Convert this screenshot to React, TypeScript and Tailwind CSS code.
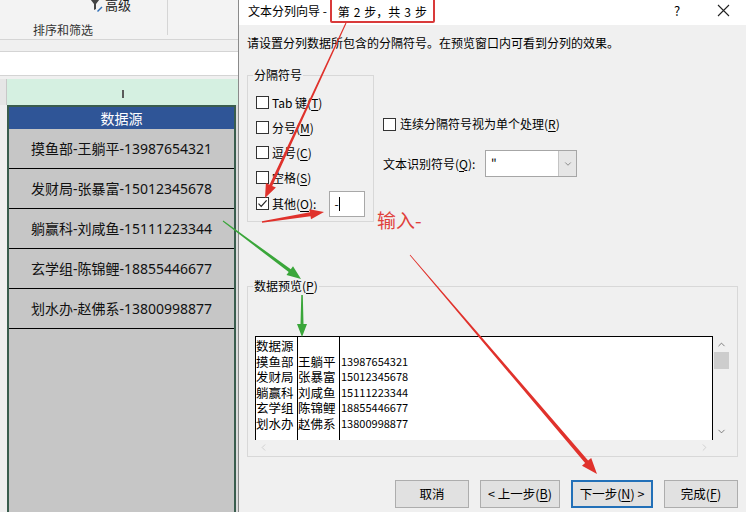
import { ChevronDown, ChevronLeft, ChevronRight, ChevronUp } from "lucide-react";
import type { ReactNode } from "react";

type Pt = [number, number];

// tapered arrow: thin tail, wider toward the head, triangular tip
function arrowPoints(from: Pt, to: Pt, w0: number, w1: number, headLen: number, headW: number) {
  const dx = to[0] - from[0];
  const dy = to[1] - from[1];
  const len = Math.hypot(dx, dy);
  const ux = dx / len;
  const uy = dy / len;
  const nx = -uy;
  const ny = ux;
  const bx = to[0] - ux * headLen;
  const by = to[1] - uy * headLen;
  const pts: Pt[] = [
    [from[0] + (nx * w0) / 2, from[1] + (ny * w0) / 2],
    [bx + (nx * w1) / 2, by + (ny * w1) / 2],
    [bx + (nx * headW) / 2, by + (ny * headW) / 2],
    to,
    [bx - (nx * headW) / 2, by - (ny * headW) / 2],
    [bx - (nx * w1) / 2, by - (ny * w1) / 2],
    [from[0] - (nx * w0) / 2, from[1] - (ny * w0) / 2],
  ];
  return pts.map((p) => p.map((v) => v.toFixed(1)).join(",")).join(" ");
}

const U = ({ children }: { children: ReactNode }) => (
  <span className="underline underline-offset-2">{children}</span>
);

const Box = ({ checked }: { checked?: boolean }) => (
  <span className="w-[13px] h-[13px] border border-[#333] bg-white flex items-center justify-center shrink-0">
    {checked && (
      <svg width="11" height="11" viewBox="0 0 11 11">
        <path d="M1.5 5.6 L4.2 8.3 L9.6 2.4" fill="none" stroke="#222" strokeWidth="1.2" />
      </svg>
    )}
  </span>
);

const sources = [
  ["摸鱼部", "王躺平", "13987654321"],
  ["发财局", "张暴富", "15012345678"],
  ["躺赢科", "刘咸鱼", "15111223344"],
  ["玄学组", "陈锦鲤", "18855446677"],
  ["划水办", "赵佛系", "13800998877"],
];

const SheetSide = () => (
  <div className="w-[238px] shrink-0 flex flex-col bg-[#f0f0f0]">
    {/* ribbon: sort & filter group */}
    <div className="h-[40px] flex bg-[#f3f3f3] border-b border-[#d5d5d5]">
      <div className="w-[168px] h-[35px] border-r border-[#d5d5d5] flex flex-col">
        <div className="-mt-[2px] h-[14px] pl-[90px] flex items-center gap-[2px]">
          <svg width="13" height="13" viewBox="0 0 13 13">
            <path d="M0.5 0.5 H9.5 L6 5 V10 L4 11 V5 Z" fill="#444" />
            <path d="M7 12 L11.5 7.5 L12.5 8.5 L8 13 Z" fill="#2f6fb8" />
          </svg>
          <span className="text-[13px] leading-[14px] text-[#222]">高级</span>
        </div>
        <div className="mt-[11px] pl-[33px] text-[12px] leading-[14px] text-[#333]">排序和筛选</div>
      </div>
    </div>
    <div className="h-[12px] bg-[#f0f0f0] border-b border-[#d4d4d4]" />
    <div className="h-[24px] bg-white border-b border-[#d4d4d4]" />
    <div className="h-[3px] bg-[#f0f0f0]" />
    {/* column header */}
    <div className="h-[26px] flex">
      <div className="w-[7px] bg-[#e6e6e6] border-r border-[#c8c8c8]" />
      <div className="flex-1 bg-[#d5f0e1] flex items-center justify-center">
        <span className="w-[2px] h-[8px] bg-[#5a5a5a] mt-[4px]" />
      </div>
    </div>
    <div className="flex-1 flex">
      <div className="w-[7px] bg-[#efefef]" />
      <div className="w-[229px] border-x-2 border-t-2 border-[#3a5d4e] bg-[#c6c6c6] flex flex-col">
        <div className="h-[22px] bg-[#2f5597] text-white text-[14px] leading-[22px] text-center">数据源</div>
        {sources.map(([a, b, c]) => (
          <div
            key={c}
            className="h-[40px] border-b border-black flex items-center justify-center text-[14px] text-[#111] font-['Noto_Sans','Noto_Sans_CJK_SC',sans-serif]"
          >
            {a}-{b}-{c}
          </div>
        ))}
      </div>
      <div className="flex-1 bg-[#dcdcdc]" />
    </div>
  </div>
);

const Button = ({ w, primary, children }: { w: string; primary?: boolean; children: ReactNode }) => (
  <div
    className={`${w} h-[28px] flex items-center justify-center bg-[#e1e1e1] text-[12.5px] ${
      primary ? "border-2 border-[#2270b8]" : "border border-[#adadad]"
    }`}
  >
    {children}
  </div>
);

const Wizard = () => (
  <div className="flex-1 flex flex-col border-l border-[#8a8a8a] bg-[#f0f0f0]">
    {/* title bar */}
    <div className="h-[25px] shrink-0 bg-white flex items-start text-[12px] leading-[14px]">
      <span className="pl-[9px] pt-[4px]">文本分列向导 -</span>
      <span className="ml-[3px] -mt-[3px] h-[26px] w-[105px] pt-[3px] border-2 border-[#d93a3a] rounded-[2px] flex items-center justify-center gap-[4px] whitespace-nowrap">
        <span>第</span>
        <span>2</span>
        <span>步，共</span>
        <span>3</span>
        <span>步</span>
      </span>
      <span className="ml-auto w-[46px] pt-[4px] text-center text-[13px]">?</span>
      <span className="w-[46px] h-[21px] flex items-center justify-center">
        <svg width="13" height="13" viewBox="0 0 13 13">
          <path d="M1 1 L12 12 M12 1 L1 12" stroke="#222" strokeWidth="1.1" />
        </svg>
      </span>
    </div>

    <div className="flex-1 flex flex-col px-[8px] text-[12px] leading-[14px]">
      <div className="pt-[11px]">请设置分列数据所包含的分隔符号。在预览窗口内可看到分列的效果。</div>

      <div className="mt-[18px] flex">
        <fieldset className="w-[127px] border border-[#d8d8d8] pl-[8px] pt-[8px] pb-[4px]">
          <legend className="-ml-[3px] px-[1px]">分隔符号</legend>
          {[
            ["Tab 键(", "T", ")"],
            ["分号(", "M", ")"],
            ["逗号(", "C", ")"],
            ["空格(", "S", ")"],
          ].map(([a, k, b]) => (
            <div key={k} className="h-[25px] flex items-center gap-[3px]">
              <Box />
              <span>
                {a}
                <U>{k}</U>
                {b}
              </span>
            </div>
          ))}
          <div className="h-[27px] flex items-center gap-[3px]">
            <Box checked />
            <span>
              其他(<U>O</U>):
            </span>
            <div className="ml-[10px] w-[36px] h-[26px] bg-white border border-[#a8a8a8] flex items-center pl-[4px]">
              <span className="leading-none">-</span>
              <span className="w-[1px] h-[14px] bg-black" />
            </div>
          </div>
        </fieldset>

        <div className="ml-[9px] flex flex-col">
          <div className="mt-[49px] h-[14px] flex items-center gap-[4px]">
            <Box />
            <span>
              连续分隔符号视为单个处理(<U>R</U>)
            </span>
          </div>
          <div className="mt-[19px] flex items-center">
            <span className="w-[102px]">
              文本识别符号(<U>Q</U>):
            </span>
            <div className="w-[92px] h-[27px] bg-white border border-[#a6a6a6] flex">
              <span className="flex-1 pl-[5px] pt-[5px]">"</span>
              <span className="w-[18px] bg-[#e6e6e6] border-l border-[#c4c4c4] flex items-center justify-center">
                <ChevronDown size={10} strokeWidth={1.5} color="#555" />
              </span>
            </div>
          </div>
        </div>
      </div>

      {/* data preview */}
      <fieldset className="mt-[57px] border border-[#d8d8d8] pl-[7px] pr-[6px] pt-[43px] pb-[1px]">
        <legend className="-ml-[2px] px-[1px]">
          数据预览(<U>P</U>)
        </legend>
        <div className="flex">
          <div className="w-[458px] h-[104px] bg-white border-t border-x border-black flex overflow-hidden">
            {[0, 1, 2].map((col) => (
              <div
                key={col}
                className={`pt-[1px] flex flex-col overflow-hidden ${col < 2 ? "w-[42px] border-r border-black" : "flex-1 pl-[1px]"}`}
              >
                <div className={`h-[15.6px] leading-[15.6px] ${col === 2 ? "text-[11px]" : "text-[12.5px]"}`}>
                  {col === 0 ? "数据源" : ""}
                </div>
                {sources.map((r) => (
                  <div
                    key={r[2]}
                    className={`h-[15.6px] leading-[15.6px] whitespace-nowrap ${col === 2 ? "text-[11px]" : "text-[12.5px]"}`}
                  >
                    {r[col]}
                  </div>
                ))}
              </div>
            ))}
          </div>
          <div className="w-[17px] h-[104px] flex flex-col items-center">
            <ChevronUp size={11} strokeWidth={1.6} color="#555" className="mt-[3px]" />
            <div className="mt-[2px] w-[15px] h-[17px] bg-[#cdcdcd]" />
            <ChevronDown size={11} strokeWidth={1.6} color="#555" className="mt-auto mb-[3px]" />
          </div>
        </div>
        <div className="w-[458px] h-[15px] flex items-center justify-between px-[3px]">
          <ChevronLeft size={11} strokeWidth={1.5} color="#c2c2c2" />
          <ChevronRight size={11} strokeWidth={1.5} color="#c2c2c2" />
        </div>
      </fieldset>

      <div className="mt-[23px] flex justify-end gap-[11px]">
        <Button w="w-[74px]">取消</Button>
        <Button w="w-[80px]">
          &lt; 上一步(<U>B</U>)
        </Button>
        <Button w="w-[82px]" primary>
          下一步(<U>N</U>) &gt;
        </Button>
        <Button w="w-[74px]">
          完成(<U>F</U>)
        </Button>
      </div>
    </div>
  </div>
);

// red / green callouts drawn over the sheet and the wizard
const Callouts = () => {
  const red = "#e0322c";
  const green = "#3aa63a";
  return (
    <>
      <svg className="absolute inset-0 pointer-events-none" width="746" height="512">
        <polygon points={arrowPoints([346, 23], [265, 198], 1, 3, 14, 11)} fill={red} />
        <polygon points={arrowPoints([262, 222], [324, 212], 1.5, 4, 14, 10)} fill={red} />
        <polygon points={arrowPoints([410, 255], [597, 474], 0.8, 4, 16, 12)} fill={red} />
        <polygon points={arrowPoints([223, 221], [301, 279], 1, 3.5, 14, 11)} fill={green} />
        <polygon points={arrowPoints([302, 295], [302, 337], 1.5, 3, 13, 10)} fill={green} />
      </svg>
      <span className="absolute left-[377px] top-[208px] text-[19px] leading-[24px] text-[#e0413b]">输入-</span>
    </>
  );
};

export default function App() {
  return (
    <div className="relative w-[746px] h-[512px] overflow-hidden flex bg-white text-black font-['Noto_Sans_CJK_SC',sans-serif]">
      <SheetSide />
      <Wizard />
      <Callouts />
    </div>
  );
}
